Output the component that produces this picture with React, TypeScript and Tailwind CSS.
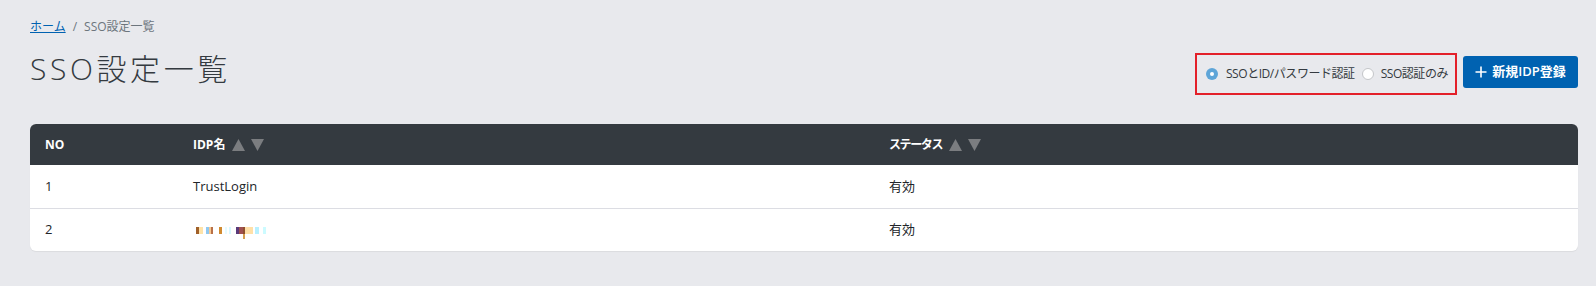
import React from "react";

const Sort = () => (
  <span className="ml-[7px] inline-flex items-center gap-[6px]">
    <svg width="13" height="12" viewBox="0 0 13 12">
      <path d="M6.5 0 L13 12 L0 12 Z" fill="#7b7d80" />
    </svg>
    <svg width="13" height="12" viewBox="0 0 13 12">
      <path d="M0 0 L13 0 L6.5 12 Z" fill="#7b7d80" />
    </svg>
  </span>
);

// mosaic for the hidden IDP name in row 2
const blocks: [number, string][] = [
  [196, "#a0602a"],
  [199, "#ffe3a8"],
  [203, "transparent"],
  [206, "#8fc8f0"],
  [209, "#f8c890"],
  [211, "#b87048"],
  [213, "transparent"],
  [219, "#d08a30"],
  [222, "transparent"],
  [225, "#e6fbff"],
  [227, "transparent"],
  [229, "#d8f8ff"],
  [231, "transparent"],
  [236, "#5a3a7a"],
  [239, "#a05050"],
  [243, "#905030"],
  [245, "#ffe0a8"],
  [253, "transparent"],
  [255, "#b8f0ff"],
  [259, "transparent"],
  [263, "#ccfbff"],
  [266, "transparent"],
];

function Mosaic() {
  return (
    <span className="relative ml-[3px] inline-flex h-[7px] items-start">
      {blocks.slice(0, -1).map(([x, c], i) => (
        <span
          key={i}
          className="h-[7px]"
          style={{ width: blocks[i + 1][0] - x, background: c }}
        />
      ))}
      <span className="absolute left-[47px] top-[7px] h-[5px] w-[2px] bg-[#d8a050]" />
    </span>
  );
}

const rows = [
  { no: "1", name: <span>TrustLogin</span>, status: "有効" },
  { no: "2", name: <Mosaic />, status: "有効" },
];

export default function App() {
  return (
    <div
      className="min-h-screen bg-[#e8e9ed] pl-[30px] pr-[18px] pt-[18px] text-[#212529]"
      style={{ fontFamily: '"Open Sans", "Noto Sans CJK JP", sans-serif' }}
    >
      <nav className="flex items-center text-[12px] leading-[18px] text-[#6c757d]">
        <a className="text-[#0062b1] underline">ホーム</a>
        <span className="mx-[7px]">/</span>
        <span>SSO設定一覧</span>
      </nav>

      <div className="mt-[13px] flex items-start justify-between">
        <h1 className="text-[30px] font-light leading-[40px] tracking-[3.6px] text-[#343a40]">
          SSO設定一覧
        </h1>
        <div className="flex items-start gap-[6px]">
          <div className="mt-[4px] flex h-[42px] items-center border-2 border-[#e3202a] pl-[9px] pr-[7px] text-[12px] tracking-[-0.45px] text-[#343a40]">
            <span className="flex h-[12px] w-[12px] items-center justify-center rounded-full bg-[#5ea5d8]">
              <span className="h-[4px] w-[4px] rounded-full bg-white" />
            </span>
            <span className="ml-[8px]">SSOとID/パスワード認証</span>
            <span className="ml-[7px] h-[12px] w-[12px] rounded-full border border-[#c4c6c9] bg-white" />
            <span className="ml-[7px]">SSO認証のみ</span>
          </div>
          <button className="mt-[7px] flex h-[32px] w-[115px] items-center justify-center gap-[5px] rounded-[3px] bg-[#0062b1] text-[13px] font-semibold text-white">
            <svg width="12" height="12" viewBox="0 0 12 12">
              <path d="M6 0.5 V11.5 M0.5 6 H11.5" stroke="white" strokeWidth="1.6" />
            </svg>
            新規IDP登録
          </button>
        </div>
      </div>

      <div className="mt-[29px] overflow-hidden rounded-[6px] bg-white text-[13px] shadow-[0_1px_1px_rgba(0,0,0,0.06)]">
        <div className="grid h-[41px] grid-cols-[148px_696px_1fr] items-center bg-[#343a40] text-[12px] font-bold text-white">
          <div className="pl-[15px]">NO</div>
          <div className="flex items-center pl-[15px]">
            IDP名
            <Sort />
          </div>
          <div className="flex items-center pl-[15px] tracking-[-1.4px]">
            ステータス
            <Sort />
          </div>
        </div>
        {rows.map((r, i) => (
          <div
            key={r.no}
            className={`grid h-[43px] grid-cols-[148px_696px_1fr] items-center ${
              i > 0 ? "border-t border-[#dcdde3]" : ""
            }`}
          >
            <div className="pl-[15px]">{r.no}</div>
            <div className="flex items-center pl-[15px]">{r.name}</div>
            <div className="pl-[15px]">{r.status}</div>
          </div>
        ))}
      </div>
    </div>
  );
}
